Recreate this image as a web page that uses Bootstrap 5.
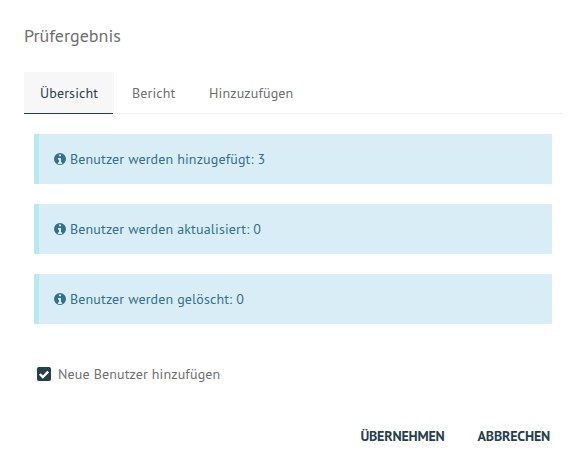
<!DOCTYPE html>
<html lang="de">
<head>
<meta charset="utf-8">
<meta name="viewport" content="width=device-width, initial-scale=1">
<title>Prüfergebnis</title>
<link href="https://cdn.jsdelivr.net/npm/bootstrap@5.3.0/dist/css/bootstrap.min.css" rel="stylesheet">
<style>
body{font-family:"PT Sans","Noto Sans",sans-serif;font-size:14px;line-height:20px;letter-spacing:.14px;color:#6f6f6f;background:#fff}
.dialog{padding:24px 21px 0 24px}
.dialog-title{font-size:18px;line-height:24px;font-weight:400;margin:0 0 24px;letter-spacing:0}
.result-tabs{--bs-nav-tabs-border-width:0;height:42px;border-bottom:1px solid #eee;gap:2px;flex-wrap:nowrap}
.result-tabs .nav-link{height:42px;padding:11px 16px 10px;border:0;border-radius:0;color:#6f6f6f;margin:0;white-space:nowrap}
.result-tabs .nav-link.active{background:linear-gradient(#263c4a,#263c4a) left bottom/89px 1px no-repeat #f7f7f7;color:#263f4e}
.results{padding:20px 10px 0;gap:20px}
.result-note{height:50px;padding:15px;border:0;border-left:5px solid #b8e8f0;border-radius:0;background:#d9edf7;color:#31708f;margin:0}
.result-note svg{width:12px;height:12px;margin-right:4px;flex:none}
.option{margin:40px 0 0 13px}
.option svg{width:14px;height:14px;margin-right:7px}
.actions{margin-top:42px;padding-right:12px;gap:33px}
.action{font-size:14px;line-height:20px;font-weight:700;letter-spacing:-.2px;color:#263f4e;padding:0;border:0;border-radius:0;white-space:nowrap}
.tab-overview{width:90px}.tab-report{width:75px}.tab-add{width:116px}
</style>
<script src="https://cdn.jsdelivr.net/npm/bootstrap@5.3.0/dist/js/bootstrap.bundle.min.js"></script>
</head>
<body>
<svg width="0" height="0" class="d-none"><symbol id="info" viewBox="0 0 1536 1536"><path fill="currentColor" fill-rule="evenodd" d="M768 0a768 768 0 1 1 0 1536A768 768 0 0 1 768 0zM640 224v160q0 32 32 32h192q32 0 32-32V224q0-32-32-32H672q-32 0-32 32zM544 640q-32 0-32 32v160q0 32 32 32h96v320h-96q-32 0-32 32v160q0 32 32 32h448q32 0 32-32v-160q0-32-32-32h-96V672q0-32-32-32z"/></symbol></svg>
<main class="dialog">
<h1 class="dialog-title">Prüfergebnis</h1>
<ul class="nav nav-tabs result-tabs">
<li class="nav-item"><a class="nav-link active tab-overview" href="#">Übersicht</a></li>
<li class="nav-item"><a class="nav-link tab-report" href="#">Bericht</a></li>
<li class="nav-item"><a class="nav-link tab-add" href="#">Hinzuzufügen</a></li>
</ul>
<section class="results d-flex flex-column">
<div class="alert result-note d-flex align-items-center"><svg><use href="#info"/></svg><span>Benutzer werden hinzugefügt: 3</span></div>
<div class="alert result-note d-flex align-items-center"><svg><use href="#info"/></svg><span>Benutzer werden aktualisiert: 0</span></div>
<div class="alert result-note d-flex align-items-center"><svg><use href="#info"/></svg><span>Benutzer werden gelöscht: 0</span></div>
</section>
<label class="option d-flex align-items-center"><svg viewBox="0 0 14 14"><rect width="14" height="14" rx="2" fill="#263f4e"/><path d="M2.8 7l3 3 5.4-5.4" fill="none" stroke="#fff" stroke-width="2.4"/></svg><span>Neue Benutzer hinzufügen</span></label>
<div class="actions d-flex justify-content-end"><button type="button" class="btn action">ÜBERNEHMEN</button><button type="button" class="btn action">ABBRECHEN</button></div>
</main>
</body>
</html>
